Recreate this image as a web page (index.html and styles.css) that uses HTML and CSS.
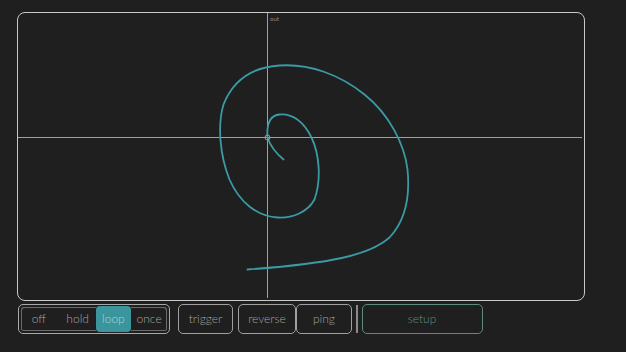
FILE: index.html
```html
<!DOCTYPE html>
<html lang="en">
<head>
    <meta charset="UTF-8">
    <meta name="viewport" content="width=device-width, initial-scale=1.0">
    <title>XY Pad</title>
    <link rel="stylesheet" href="styles.css">
</head>
<body>
    <div class="app">
        <!-- XY scope -->
        <div class="scope">
            <svg class="trace" viewBox="18.5 13.5 564 285" width="564" height="285">
                <line x1="268" y1="13.5" x2="268" y2="298.5" class="axis"/>
                <line x1="18.5" y1="138" x2="582.5" y2="138" class="axis"/>
                <path class="spiral" d="M284,160 Q272,150 268,138 C267,125 270,116 280,115 C294,114 304,122 312,138 C320,155 322,180 315,200 C308,213 292,219 278,218 C258,217 240,203 230,180 C220,155 218,125 224,105 C232,85 248,68 280,66 C310,64 340,75 365,95 C390,115 405,145 408,170 C411,200 405,222 390,238 C370,256 330,264 248,270"/>
                <circle cx="268" cy="138" r="2.5" class="cursor"/>
            </svg>
            <span class="axis-label">out</span>
        </div>

        <!-- Transport controls -->
        <div class="controls">
            <div class="mode-group">
                <button class="btn mode">off</button>
                <button class="btn mode">hold</button>
                <button class="btn mode active">loop</button>
                <button class="btn mode">once</button>
            </div>
            <button class="btn single trigger">trigger</button>
            <div class="pair">
                <button class="btn single reverse">reverse</button>
                <button class="btn single ping">ping</button>
            </div>
            <div class="divider"></div>
            <button class="btn single setup">setup</button>
        </div>
    </div>
</body>
</html>
```

FILE: styles.css
```css
* {
    margin: 0;
    padding: 0;
    box-sizing: border-box;
    font-family: Lato, 'Open Sans', sans-serif;
}

body {
    background-color: #1f1f1f;
    color: #a8a8a8;
    width: 626px;
    height: 352px;
    overflow: hidden;
}

.app {
    display: flex;
    flex-direction: column;
    padding: 12px 0 0 17px;
}

.scope {
    position: relative;
    width: 568px;
    height: 289px;
    border: 1.5px solid #c8c8c8;
    border-radius: 8px;
}

.trace {
    display: block;
}

.axis {
    stroke: #a0a0a0;
    stroke-width: 1;
}

.spiral {
    fill: none;
    stroke: #3b9aa4;
    stroke-width: 1.8;
    stroke-linecap: round;
    stroke-linejoin: round;
}

.cursor {
    fill: none;
    stroke: #9a9a9a;
    stroke-width: 1;
}

.axis-label {
    position: absolute;
    left: 252px;
    top: 2px;
    font-size: 6px;
    color: #8a8a8a;
}

.controls {
    display: flex;
    align-items: stretch;
    height: 30px;
    margin-top: 3px;
    margin-left: 1px;
}

button {
    background: none;
    border: none;
    color: #a4a4a4;
    font-size: 12px;
    font-weight: 300;
    cursor: pointer;
}

.mode-group {
    display: flex;
    width: 152px;
    padding: 2px;
    border: 1.5px solid #a8a8a8;
    border-radius: 5px;
}

.mode-group .mode:first-child {
    border-radius: 3px 0 0 3px;
    box-shadow: inset 1px 1px 0 #6a6a6a, inset 0 -1px 0 #6a6a6a;
    padding-right: 3px;
}

.mode-group .mode:last-child {
    border-radius: 0 3px 3px 0;
    box-shadow: inset -1px 1px 0 #6a6a6a, inset 0 -1px 0 #6a6a6a;
}

.mode {
    flex: 1;
    box-shadow: inset 0 1px 0 #6a6a6a, inset 0 -1px 0 #6a6a6a;
    padding-bottom: 1px;
}

.mode.active {
    background-color: #3b959d;
    color: #a9d4d6;
    border-radius: 4px;
    box-shadow: none;
    margin: -1px 0;
}

.single {
    border: 1.5px solid #a0a0a0;
    border-radius: 5px;
    padding-bottom: 1px;
}

.trigger {
    width: 55px;
    margin-left: 8px;
}

.pair {
    display: flex;
    margin-left: 5px;
}

.reverse {
    width: 58px;
}

.ping {
    width: 56px;
}

.divider {
    width: 1.5px;
    margin: 1px 4px 1px 4px;
    background-color: #8a8a8a;
}

.setup {
    width: 121px;
    border-color: #5c8c80;
    color: #5f8f84;
}
```
